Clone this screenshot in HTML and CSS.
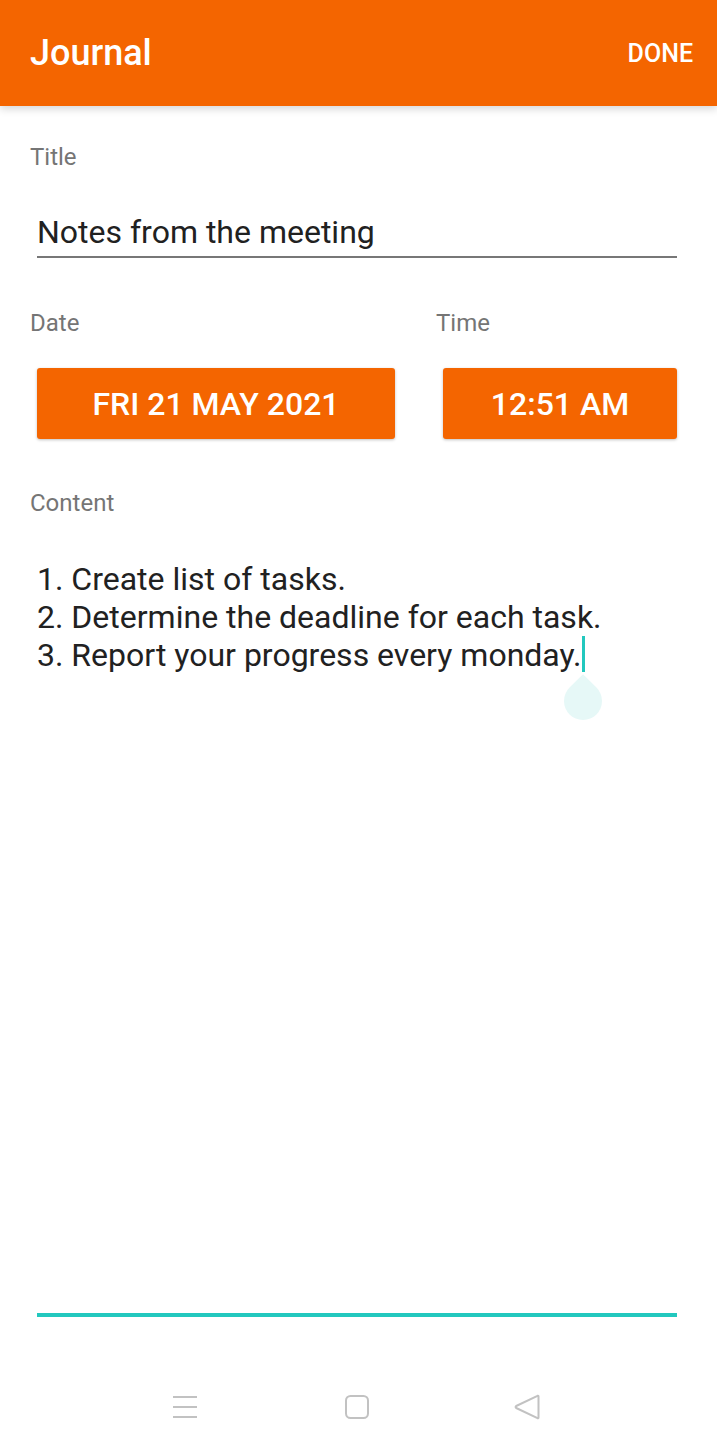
FILE: index.html
```html
<!DOCTYPE html>
<html>
<head>
<meta charset="utf-8">
<link rel="stylesheet" href="styles.css">
</head>
<body>
<div class="screen">
  <header class="appbar">
    <div class="appbar-title">Journal</div>
    <div class="appbar-action">DONE</div>
  </header>
  <main class="form">
    <div class="label">Title</div>
    <div class="title-input">Notes from the meeting</div>
    <div class="dt-row">
      <div class="dt-col dt-date">
        <div class="label">Date</div>
        <div class="btn">FRI 21 MAY 2021</div>
      </div>
      <div class="dt-col dt-time">
        <div class="label">Time</div>
        <div class="btn">12:51 AM</div>
      </div>
    </div>
    <div class="label label-content">Content</div>
    <div class="content-input">
      <div class="line">1. Create list of tasks.</div>
      <div class="line">2. Determine the deadline for each task.</div>
      <div class="line">3. Report your progress every monday.<span class="cursor"><span class="handle"></span></span></div>
    </div>
  </main>
  <nav class="navbar">
    <svg class="nav-icon nav-menu" width="24" height="24" viewBox="0 0 24 24"><path d="M0 2h24M0 12h24M0 22h24" stroke="#c2c2c2" stroke-width="2" fill="none"/></svg>
    <svg class="nav-icon nav-home" width="24" height="24" viewBox="0 0 24 24"><rect x="1" y="1" width="22" height="22" rx="4.5" stroke="#c2c2c2" stroke-width="2" fill="none"/></svg>
    <svg class="nav-icon nav-back" width="26" height="26" viewBox="0 0 26 26"><path d="M23.5 1.8 L2.2 12 Q1 13 2.2 14 L23.5 24.2 Q24.5 24.6 24.5 23.6 L24.5 2.4 Q24.5 1.4 23.5 1.8Z" stroke="#c2c2c2" stroke-width="2" fill="none" stroke-linejoin="round"/></svg>
  </nav>
</div>
</body>
</html>
```

FILE: styles.css
```css
* { box-sizing: border-box; }
html, body { margin: 0; padding: 0; background: #fff; }
body { font-family: Roboto, "Noto Sans", sans-serif; }
.screen {
  width: 717px;
  height: 1451px;
  display: flex;
  flex-direction: column;
  overflow: hidden;
}
.appbar {
  height: 106px;
  flex: none;
  background: #f46500;
  color: #fff;
  display: flex;
  align-items: center;
  justify-content: space-between;
  padding: 0 24px 0 30px;
  box-shadow: 0 3px 8px rgba(0,0,0,0.16);
  position: relative;
  z-index: 1;
}
.appbar-title { font-size: 36px; font-weight: 500; }
.appbar-action { font-size: 25px; font-weight: 500; }
.form {
  flex: 1;
  display: flex;
  flex-direction: column;
  padding: 37px 40px 46px 30px;
}
.label {
  font-size: 24px;
  color: #757575;
  line-height: 28px;
}
.title-input {
  margin: 41px 0 0 7px;
  font-size: 32px;
  line-height: 40px;
  color: #212121;
  padding-bottom: 4px;
  border-bottom: 2px solid #777;
}
.dt-row {
  display: flex;
  margin-top: 51px;
}
.dt-col { display: flex; flex-direction: column; }
.dt-date { width: 406px; }
.dt-time { flex: 1; }
.btn {
  margin: 31px 0 0 7px;
  height: 71px;
  background: #f46500;
  color: #fff;
  border-radius: 3px;
  box-shadow: 0 1px 3px rgba(0,0,0,0.25);
  font-size: 32px;
  font-weight: 500;
  display: flex;
  align-items: center;
  justify-content: center;
}
.dt-date .btn { width: 358px; }
.label-content { margin-top: 50px; }
.content-input {
  flex: 1;
  margin: 43px 0 0 7px;
  border-bottom: 4px solid #22c8be;
  font-size: 32px;
  line-height: 38px;
  color: #212121;
}
.cursor {
  display: inline-block;
  width: 3px;
  height: 36px;
  background: #22c8be;
  vertical-align: top;
  margin-left: 1px;
  position: relative;
}
.handle {
  position: absolute;
  left: -18px;
  top: 46px;
  width: 38px;
  height: 38px;
  background: #e6f8f7;
  border-radius: 0 50% 50% 50%;
  transform: rotate(45deg);
}
.navbar {
  height: 88px;
  flex: none;
  display: flex;
  align-items: center;
  padding-left: 173px;
}
.nav-icon { display: block; }
.nav-home { margin-left: 148px; }
.nav-back { margin-left: 145px; }
```
